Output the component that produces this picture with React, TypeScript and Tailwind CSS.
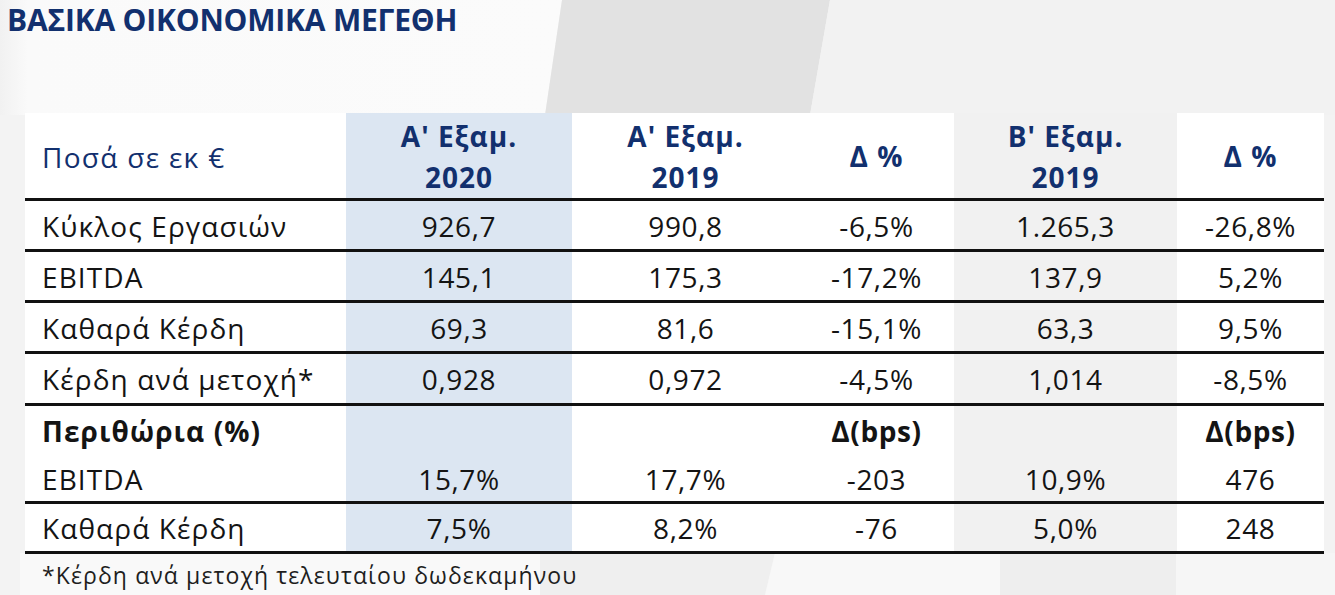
import React from "react";

const NAVY = "text-[#12306e]";

type Row = {
  label: string;
  vals: string[];
  bold?: boolean;
  h: string;
  border: boolean;
};

const rows: Row[] = [
  { label: "Κύκλος Εργασιών", vals: ["926,7", "990,8", "-6,5%", "1.265,3", "-26,8%"], h: "h-[48px]", border: true },
  { label: "EBITDA", vals: ["145,1", "175,3", "-17,2%", "137,9", "5,2%"], h: "h-[48px]", border: true },
  { label: "Καθαρά Κέρδη", vals: ["69,3", "81,6", "-15,1%", "63,3", "9,5%"], h: "h-[48px]", border: true },
  { label: "Κέρδη ανά μετοχή*", vals: ["0,928", "0,972", "-4,5%", "1,014", "-8,5%"], h: "h-[49px]", border: true },
  { label: "Περιθώρια (%)", vals: ["", "", "Δ(bps)", "", "Δ(bps)"], bold: true, h: "h-[49px]", border: false },
  { label: "EBITDA", vals: ["15,7%", "17,7%", "-203", "10,9%", "476"], h: "h-[46px]", border: true },
  { label: "Καθαρά Κέρδη", vals: ["7,5%", "8,2%", "-76", "5,0%", "248"], h: "h-[47px]", border: true },
];

const colBg = ["bg-[#dce6f2]", "bg-white", "bg-white", "bg-[#f1f1f1]", "bg-white"];

function Divider() {
  return <div className="w-full h-0.75 bg-[#111111] border-t-[3px] border-solid border-[#111111]" />;
}

function Background() {
  return (
    <svg
      className="absolute inset-0 z-0"
      width="1335"
      height="595"
      viewBox="0 0 1335 595"
      aria-hidden="true"
    >
      <defs>
        <linearGradient id="lg1" x1="0" y1="0" x2="1" y2="0">
          <stop offset="0" stopColor="#f1f1f1" />
          <stop offset="0.05" stopColor="#fafafa" />
          <stop offset="1" stopColor="#fbfbfb" />
        </linearGradient>
      </defs>
      <rect x="0" y="0" width="1335" height="595" fill="#f3f3f3" />
      <polygon points="0,0 562,0 545,115 0,115" fill="url(#lg1)" />
      <polygon points="562,0 830,0 810,115 545,115" fill="#e2e2e2" />
      <polygon points="830,0 1335,0 1335,115 810,115" fill="#f2f2f2" />
      <polygon points="20,553 540,553 540,595 20,595" fill="#f9f9f9" />
      <polygon points="540,553 775,553 765,595 540,595" fill="#efefef" />
      <polygon points="775,553 1000,553 1000,595 765,595" fill="#f8f8f8" />
      <polygon points="1000,553 1176,553 1176,595 1000,595" fill="#eeeeee" />
      <polygon points="1176,553 1335,553 1335,595 1176,595" fill="#f6f6f6" />
    </svg>
  );
}

export default function App() {
  return (
    <div
      className="relative w-[1335px] h-[595px] overflow-hidden"
      style={{ fontFamily: '"Open Sans", "Noto Sans", sans-serif' }}
    >
      <Background />
      <div className="relative z-10 flex flex-col">
        <h1 className={`pl-[7px] pt-[1px] h-[113px] text-[30px] leading-[38px] font-bold tracking-[-0.2px] ${NAVY}`}>
          ΒΑΣΙΚΑ ΟΙΚΟΝΟΜΙΚΑ ΜΕΓΕΘΗ
        </h1>
        <div className="ml-[25px] w-[1299px] flex flex-col">
          {/* header */}
          <div className="grid grid-cols-[321px_226px_227px_155px_223px_147px] h-[85px]">
            <div className={`bg-white flex items-center pl-[17px] pt-[2px] text-[28px] tracking-[1.3px] ${NAVY}`}>
              Ποσά σε εκ €
            </div>
            {[
              ["Α' Εξαμ.", "2020"],
              ["Α' Εξαμ.", "2019"],
              ["Δ %"],
              ["Β' Εξαμ.", "2019"],
              ["Δ %"],
            ].map((lines, i) => (
              <div
                key={i}
                className={`${colBg[i]} flex flex-col items-center justify-center pt-[2px] text-[28px] leading-[41px] font-bold tracking-[1px] ${NAVY}`}
              >
                {lines.map((l, j) => (
                  <span key={j}>{l}</span>
                ))}
              </div>
            ))}
          </div>
          <Divider />
          {rows.map((r, ri) => (
            <div key={ri} className="flex flex-col">
              <div className={`grid grid-cols-[321px_226px_227px_155px_223px_147px] ${r.h}`}>
                <div
                  className={`bg-white flex items-center pl-[17px] pt-[1px] text-[28px] tracking-[1.1px] text-[#141414] ${
                    r.bold ? "font-bold" : ""
                  }`}
                >
                  {r.label}
                </div>
                {r.vals.map((v, i) => (
                  <div
                    key={i}
                    className={`${colBg[i]} flex items-center justify-center pt-[1px] text-[28px] tracking-[0.6px] text-[#141414] ${
                      r.bold ? "font-bold" : ""
                    }`}
                  >
                    {v}
                  </div>
                ))}
              </div>
              {r.border ? <Divider /> : null}
            </div>
          ))}
          <div className="pl-[17px] pt-[6px] text-[23px] leading-[30px] text-[#1e1e1e] tracking-[1.1px]">
            *Κέρδη ανά μετοχή τελευταίου δωδεκαμήνου
          </div>
        </div>
      </div>
    </div>
  );
}
